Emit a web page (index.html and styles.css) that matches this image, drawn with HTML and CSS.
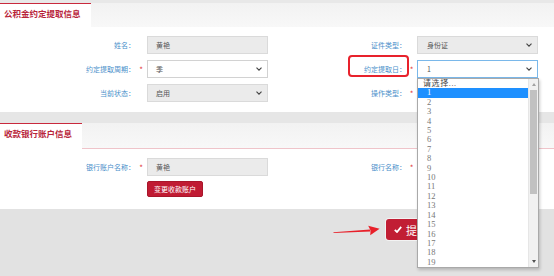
FILE: index.html
```html
<!DOCTYPE html>
<html lang="zh-CN">
<head>
  <meta charset="UTF-8" />
  <title>公积金约定提取</title>
  <link rel="stylesheet" href="styles.css">
</head>
<body>

<div class="top-strip"></div>

<div class="panel">
  <div class="panel-head">
    <div class="tab">公积金约定提取信息</div>
    <div class="head-fill"></div>
  </div>

  <div class="form-grid">
    <span class="lbl">姓名：</span><span class="star"></span>
    <div class="field ro">黄艳</div>
    <span class="lbl">证件类型：</span><span class="star"></span>
    <div class="field ro right">身份证
      <svg class="chev" width="6" height="4" viewBox="0 0 6 4"><polyline points="0.5,0.6 3,3.2 5.5,0.6" fill="none" stroke="#444" stroke-width="1.1"/></svg>
    </div>

    <span class="lbl">约定提取周期：</span><span class="star">*</span>
    <div class="field">季
      <svg class="chev" width="6" height="4" viewBox="0 0 6 4"><polyline points="0.5,0.6 3,3.2 5.5,0.6" fill="none" stroke="#444" stroke-width="1.1"/></svg>
    </div>
    <span class="lbl"><span class="hl">约定提取日：</span></span><span class="star">*</span>
    <div class="field focus right">1
      <svg class="chev" width="6" height="4" viewBox="0 0 6 4"><polyline points="0.5,0.6 3,3.2 5.5,0.6" fill="none" stroke="#444" stroke-width="1.1"/></svg>

      <div class="dropdown">
        <ul class="options">
          <li class="first">请选择...</li>
          <li class="active">1</li>
          <li>2</li><li>3</li><li>4</li><li>5</li><li>6</li><li>7</li><li>8</li><li>9</li>
          <li>10</li><li>11</li><li>12</li><li>13</li><li>14</li><li>15</li><li>16</li><li>17</li><li>18</li><li>19</li>
        </ul>
        <div class="scrollbar">
          <span class="arrow-up"></span>
          <span class="thumb"></span>
          <span class="arrow-down"></span>
        </div>
      </div>
    </div>

    <span class="lbl">当前状态：</span><span class="star"></span>
    <div class="field ro">启用
      <svg class="chev" width="6" height="4" viewBox="0 0 6 4"><polyline points="0.5,0.6 3,3.2 5.5,0.6" fill="none" stroke="#444" stroke-width="1.1"/></svg>
    </div>
    <span class="lbl">操作类型：</span><span class="star">*</span>
    <div class="field right"></div>
  </div>
</div>

<div class="section-gap"></div>

<div class="panel">
  <div class="panel-head second">
    <div class="tab">收款银行账户信息</div>
    <div class="head-fill"></div>
  </div>

  <div class="form-grid bank">
    <span class="lbl">银行账户名称：</span><span class="star">*</span>
    <div class="field ro">黄艳</div>
    <span class="lbl">银行名称：</span><span class="star">*</span>
    <div class="field right"></div>

    <span></span><span></span>
    <div><button class="btn-change">变更收款账户</button></div>
  </div>
</div>

<div class="footer">
  <svg class="pointer" width="48" height="14" viewBox="0 0 48 14">
    <polygon points="0.5,8.2 37,5.4 37.4,7.4 0.5,8.9" fill="#e8202a"/>
    <polygon points="35.2,1.8 46.6,4.7 37.2,11.2 37.6,6.4" fill="#e8202a"/>
  </svg>
  <button class="btn-submit">
    <svg width="8" height="7" viewBox="0 0 8 7"><polyline points="0.8,3.8 3,6 7.2,0.9" fill="none" stroke="#fff" stroke-width="1.8"/></svg>
    提交
  </button>
</div>

</body>
</html>
```

FILE: styles.css
```css
* { box-sizing: border-box; }
body {
  margin: 0;
  font-family: "Noto Sans CJK SC", sans-serif;
  font-size: 7px;
  color: #555;
  background: #e2e2e2;
}
.top-strip { height: 3px; background: #e8e8e8; }
.panel { background: #fff; }
.panel-head { display: flex; height: 24px; }
.panel-head.second { height: 26px; }
.tab {
  border-top: 1px solid #c9293d;
  background: #fff;
  color: #b8243a;
  font-weight: 700;
  font-size: 8.5px;
  line-height: 12px;
  padding: 3px 10px 0 4px;
}
.head-fill { flex: 1; background: linear-gradient(#f2f2f2, #f8f8f8); }
.second .head-fill { border-bottom: 1px solid #efc4ca; }
.section-gap { height: 11px; background: #e6e6e6; }

.form-grid {
  display: grid;
  grid-template-columns: 135px 12px 121px 138px 11px 121px;
  grid-auto-rows: 18px;
  row-gap: 6px;
  padding: 9px 0 10px;
}
.form-grid.bank { grid-auto-rows: auto; row-gap: 5px; padding: 9px 0 12px; }
.lbl {
  align-self: center;
  text-align: right;
  color: #4a8fca;
  line-height: 10px;
}
.hl { position: relative; }
.hl::after {
  content: '';
  position: absolute;
  left: -16px; right: -3px;
  top: -9px; bottom: -3px;
  border: 2px solid #e8222c;
  border-radius: 4px;
}
.star {
  align-self: center;
  text-align: center;
  color: #e23b3b;
  font-size: 8px;
  line-height: 8px;
  padding-top: 2px;
}
.field {
  position: relative;
  display: flex;
  align-items: center;
  justify-content: space-between;
  height: 18px;
  padding: 0 5px 0 8px;
  border: 1px solid #d2d2d2;
  background: #fff;
  color: #555;
}
.field.right { padding-left: 9px; }
.field.ro { background: #ebebeb; border-color: #dadada; }
.field.focus { border-color: #7ab8ea; }
.chev { flex: none; }

.dropdown {
  position: absolute;
  z-index: 10;
  top: 17px;
  left: -1px;
  width: 122px;
  height: 190px;
  display: flex;
  background: #fff;
  border: 1px solid #a9a9a9;
  box-shadow: 1px 2px 3px rgba(0,0,0,0.2);
}
.options {
  flex: 1;
  margin: 0;
  padding: 0;
  list-style: none;
  font-family: "Liberation Serif", "Noto Sans CJK SC", serif;
  font-size: 8.5px;
  line-height: 9.4px;
  color: #777;
}
.options li { padding-left: 9px; }
.options li.first { padding-left: 5px; color: #444; font-size: 8px; letter-spacing: 0.6px; }
.options li.active { background: #1e90ff; color: #fff; }
.scrollbar {
  width: 10px;
  background: #f1f1f1;
  display: flex;
  flex-direction: column;
  align-items: center;
  border-left: 1px solid #e6e6e6;
}
.arrow-up {
  margin-top: 4px;
  border: 2.5px solid transparent;
  border-top: 0;
  border-bottom: 3px solid #a3a3a3;
}
.thumb {
  width: 7px;
  height: 104px;
  margin-top: 4px;
  background: #c1c1c1;
}
.arrow-down {
  margin-top: auto;
  margin-bottom: 4px;
  border: 2.5px solid transparent;
  border-bottom: 0;
  border-top: 3px solid #505050;
}

.btn-change {
  height: 16px;
  padding: 0 6px;
  border: 1px solid #a8162b;
  border-radius: 2px;
  background: #c01b33;
  color: #fff;
  font-family: inherit;
  font-size: 7px;
  line-height: 14px;
}

.footer {
  position: relative;
  height: 67px;
  padding: 10px 0 0 386px;
}
.pointer { position: absolute; left: 333px; top: 15px; }
.btn-submit {
  display: inline-flex;
  align-items: center;
  gap: 4px;
  height: 21px;
  padding: 0 14px 0 8px;
  border: none;
  border-radius: 3px;
  background: #c11e34;
  box-shadow: 0 0 0 1px rgba(255,255,255,0.6);
  color: #fff;
  font-family: inherit;
  font-size: 11px;
}
```
